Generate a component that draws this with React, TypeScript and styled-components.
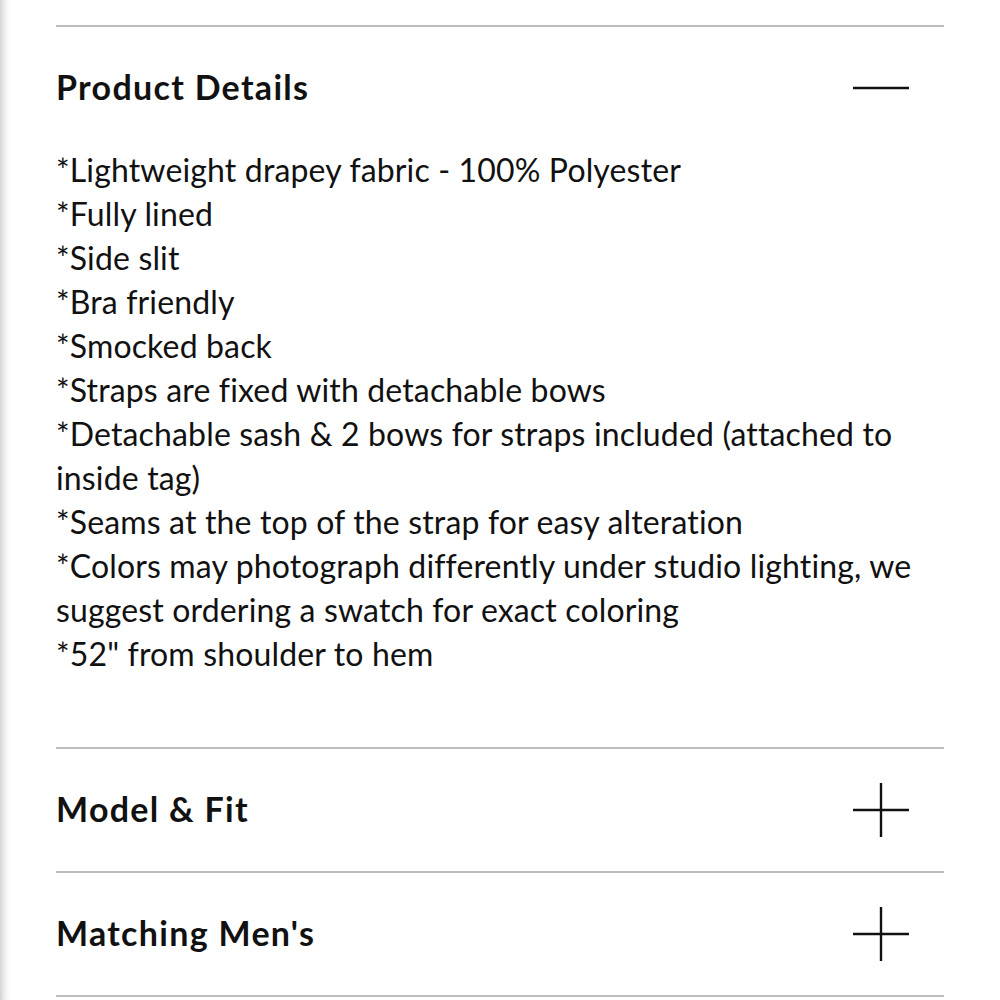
import styled, { createGlobalStyle } from 'styled-components'

const Global = createGlobalStyle`
	body {
		margin: 0;
		background: linear-gradient(to right, #d4d4d4 0px, #f4f4f4 6px, #ffffff 11px);
		font-family: Lato, "Open Sans", sans-serif;
		color: #111;
	}
`

const Page = styled.div`
	padding: 25px 56px 0 56px;
	width: 888px;
`

const Section = styled.section`
	border-top: 2px solid #bcbcbc;
	&:last-child {
		border-bottom: 2px solid #bcbcbc;
	}
`

const Header = styled.div`
	display: flex;
	align-items: center;
	justify-content: space-between;
	height: 122px;
	padding-right: 35px;
`

const Title = styled.h2`
	margin: 0;
	font-size: 34px;
	font-weight: 700;
	letter-spacing: 1.3px;
	margin-top: -4px;
`

const Body = styled.div`
	font-size: 32px;
	line-height: 44px;
	font-weight: 400;
	letter-spacing: 0.15px;
	padding-bottom: 71px;
	margin-top: -1px;
`

const Line = styled.div``

const Icon = ({ open }: { open: boolean }) => (
	<svg width="56" height="54" viewBox="0 0 56 54">
		<line x1="0" y1="27" x2="56" y2="27" stroke="#111" strokeWidth="2.4" />
		{!open && <line x1="28" y1="0" x2="28" y2="54" stroke="#111" strokeWidth="2.4" />}
	</svg>
)

const details = [
	'*Lightweight drapey fabric - 100% Polyester',
	'*Fully lined',
	'*Side slit',
	'*Bra friendly',
	'*Smocked back',
	'*Straps are fixed with detachable bows',
	'*Detachable sash & 2 bows for straps included (attached to inside tag)',
	'*Seams at the top of the strap for easy alteration',
	'*Colors may photograph differently under studio lighting, we suggest ordering a swatch for exact coloring',
	'*52" from shoulder to hem',
]

export default function App() {
	return <>
		<Global />
		<Page>
			<Section>
				<Header>
					<Title>Product Details</Title>
					<Icon open />
				</Header>
				<Body>
					{details.map(d => <Line key={d}>{d}</Line>)}
				</Body>
			</Section>
			<Section>
				<Header>
					<Title>Model &amp; Fit</Title>
					<Icon open={false} />
				</Header>
			</Section>
			<Section>
				<Header>
					<Title>Matching Men's</Title>
					<Icon open={false} />
				</Header>
			</Section>
		</Page>
	</>
}
